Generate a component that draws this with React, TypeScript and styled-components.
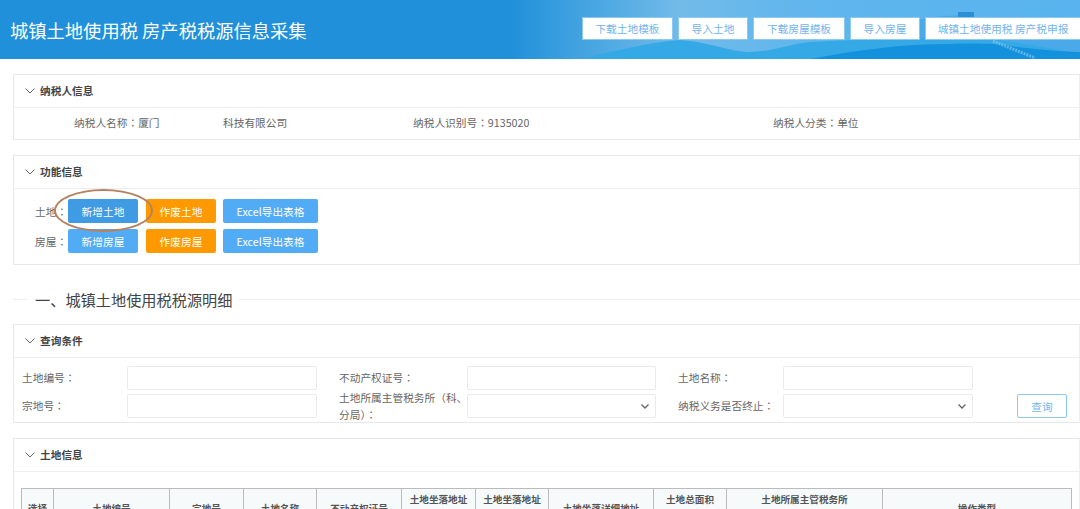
import styled, { createGlobalStyle } from "styled-components";

const GlobalStyle = createGlobalStyle`
  html, body {
    margin: 0;
    padding: 0;
    height: 509px;
    overflow: hidden;
    background: #fff;
    font-family: "Noto Sans CJK SC", "Noto Sans", sans-serif;
    font-size: 10.7px;
    color: #666;
  }
  * {
    box-sizing: border-box;
  }
`;

const Page = styled.div`
  width: 1080px;
  height: 509px;
  overflow: hidden;
`;

const Header = styled.header`
  position: relative;
  display: flex;
  align-items: center;
  justify-content: space-between;
  height: 59px;
  background: linear-gradient(90deg, #2090da 0, #2090da 510px, #3b9fdf 565px, #72bbe9 680px, #60b6ed 800px, #58b3ee 1080px);
  overflow: hidden;
`;

const HeaderArt = styled.svg`
  position: absolute;
  right: 0;
  top: 0;
  width: 600px;
  height: 59px;
`;

const HeaderTitle = styled.h1`
  position: relative;
  margin: 0 0 0 10px;
  font-size: 18.3px;
  font-weight: 400;
  color: #fff;
  white-space: nowrap;
`;

const HeaderActions = styled.div`
  position: relative;
  display: flex;
  gap: 5px;
  margin: 0 -1px 2px 0;
`;

const HeaderButton = styled.button<{ $w: number }>`
  width: ${(p) => p.$w}px;
  height: 23px;
  flex: none;
  padding: 0;
  border: 1px solid #8cc8f2;
  background: #fff;
  color: #72b4ee;
  font: inherit;
  white-space: nowrap;
`;

const Content = styled.main`
  padding: 15px 0 0 13px;
`;

const Panel = styled.section<{ $mb: number }>`
  margin-bottom: ${(p) => p.$mb}px;
  border: 1px solid #e8e8e8;
  border-right-color: #eee;
  background: #fff;
`;

const PanelHead = styled.div`
  display: flex;
  align-items: center;
  gap: 5px;
  height: 33px;
  padding: 0 0 1px 11px;
  border-bottom: 1px solid #eee;
  font-weight: 700;
  color: #444;
`;

const Chevron = () => (
  <svg width="10" height="6" viewBox="0 0 10 6" fill="none" stroke="#666" strokeWidth="1">
    <path d="M0.5 0.5 5 5 9.500 0.500" />
  </svg>
);

// Centred full-width colon, the SC face pushes it to the left of its box
const Colon = styled.span`
  font-family: "Noto Sans CJK TC", sans-serif;
`;

const InfoRow = styled.div`
  display: grid;
  grid-template-columns: 149px 190px 360px 1fr;
  align-items: center;
  height: 31px;
  padding: 0 0 2px 60px;
`;

const ActionArea = styled.div`
  position: relative;
  display: flex;
  flex-direction: column;
  gap: 6px;
  padding: 10px 0 11px 21px;
`;

const ActionRow = styled.div`
  display: flex;
  align-items: center;
`;

const ActionLabel = styled.span`
  width: 33px;
`;

const ActionButton = styled.button<{ $kind: "blue" | "active" | "orange"; $w: number }>`
  width: ${(p) => p.$w}px;
  height: 24px;
  margin-right: ${(p) => (p.$kind === "orange" ? 7 : 8)}px;
  padding: 0;
  border: 0;
  border-radius: 2px;
  color: #fff;
  font: inherit;
  background: ${(p) => (p.$kind === "orange" ? "#ff9900" : p.$kind === "active" ? "#3f9be3" : "#52abf5")};
`;

const Ellipse = styled.span`
  position: absolute;
  left: 40px;
  top: 0;
  width: 99px;
  height: 43px;
  border: 2px solid #b5825f;
  border-radius: 50%;
  pointer-events: none;
`;

const SectionTitle = styled.div`
  display: flex;
  align-items: center;
  gap: 7px;
  height: 24px;
  margin-bottom: 13px;
  margin-top: 22px;
  font-size: 15.2px;
  color: #444;
  &::before,
  &::after {
    content: "";
    height: 1px;
    background: #eee;
  }
  &::before {
    width: 15px;
  }
  &::after {
    flex: 1;
  }
`;

const QueryGrid = styled.div`
  display: grid;
  grid-template-columns: 105px 190px 22px 128px 189px 22px 105px 190px 44px 50px;
  grid-template-rows: 24px 24px;
  row-gap: 4px;
  align-items: center;
  padding: 8px 0 4px 8px;
`;

const FieldLabel = styled.label<{ $col: number }>`
  grid-column: ${(p) => p.$col};
  padding-bottom: 1px;
  line-height: 17px;
  white-space: nowrap;
`;

const TextInput = styled.input<{ $col: number }>`
  grid-column: ${(p) => p.$col};
  width: 100%;
  height: 24px;
  border: 1px solid #eaeaea;
  border-radius: 2px;
  background: #fff;
`;

const SelectInput = styled.select<{ $col: number }>`
  grid-column: ${(p) => p.$col};
  width: 100%;
  height: 24px;
  border: 1px solid #eaeaea;
  border-radius: 2px;
  appearance: none;
  background: #fff url("data:image/svg+xml,%3Csvg xmlns='http://www.w3.org/2000/svg' width='8' height='5' fill='none' stroke='%23666' stroke-width='1.400'%3E%3Cpath d='M.5.5 4 4 7.500.5'/%3E%3C/svg%3E") no-repeat right 6px center;
`;

const QueryButton = styled.button`
  grid-column: 10;
  height: 24px;
  padding: 0;
  border: 1px solid #8cc8f2;
  border-radius: 2px;
  background: #fff;
  color: #72b4ee;
  font: inherit;
`;

const TableArea = styled.div`
  padding: 16px 8px 0 7px;
`;

const LandTable = styled.table`
  width: 1050px;
  border-collapse: collapse;
  table-layout: fixed;
  border: 1px solid #bbb;
`;

const HeadCell = styled.th<{ $w: number }>`
  width: ${(p) => p.$w}px;
  height: 38px;
  padding: 0;
  border: 1px solid #bbb;
  background: #f6fafb;
  font-weight: 700;
  font-size: 9.6px;
  line-height: 18px;
  color: #555;
  vertical-align: middle;
`;

const columns: [string, number][] = [
  ["选择", 32],
  ["土地编号", 116],
  ["宗地号", 74],
  ["土地名称", 73],
  ["不动产权证号", 85],
  ["土地坐落地址\n（行政区划）", 74],
  ["土地坐落地址\n（所属街道）", 73],
  ["土地坐落详细地址", 105],
  ["土地总面积\n（平方米）", 73],
  ["土地所属主管税务所\n（科、分局）", 156],
  ["操作类型", 189],
];

const App = () => {
  return (
    <Page>
      <GlobalStyle />
      <Header>
        <HeaderArt viewBox="0 0 600 59" preserveAspectRatio="none">
          <path d="M430 22C460 14 490 12 520 24 550 32 580 30 600 34V59H430Z" fill="#4aa9e8" />
          <path d="M100 59C130 52 170 42 200 40 230 42 250 52 270 52 290 52 310 44 330 42 400 38 470 38 520 40 560 46 590 52 600 54V59Z" fill="#35a9e6" />
          <path d="M330 59C380 50 420 44 470 44 500 43 520 44 530 46 560 50 590 52 600 52V59Z" fill="#1391dd" />
          <path d="M513 41 555 58" stroke="#8fcdf0" strokeWidth="3" strokeDasharray="2 1" opacity="0.6" />
          <rect x="478" y="12" width="16" height="5" fill="#2b8fd6" />
        </HeaderArt>
        <HeaderTitle>城镇土地使用税 房产税税源信息采集</HeaderTitle>
        <HeaderActions>
          <HeaderButton $w={91}>下载土地模板</HeaderButton>
          <HeaderButton $w={70}>导入土地</HeaderButton>
          <HeaderButton $w={92}>下载房屋模板</HeaderButton>
          <HeaderButton $w={70}>导入房屋</HeaderButton>
          <HeaderButton $w={156}>城镇土地使用税 房产税申报</HeaderButton>
        </HeaderActions>
      </Header>
      <Content>
        <Panel $mb={15}>
          <PanelHead><Chevron />纳税人信息</PanelHead>
          <InfoRow>
            <span>纳税人名称<Colon>：</Colon>厦门</span>
            <span>科技有限公司</span>
            <span>纳税人识别号<Colon>：</Colon>9135020</span>
            <span>纳税人分类<Colon>：</Colon>单位</span>
          </InfoRow>
        </Panel>
        <Panel $mb={0}>
          <PanelHead><Chevron />功能信息</PanelHead>
          <ActionArea>
            <ActionRow>
              <ActionLabel>土地<Colon>：</Colon></ActionLabel>
              <ActionButton $kind="active" $w={70}>新增土地</ActionButton>
              <ActionButton $kind="orange" $w={70}>作废土地</ActionButton>
              <ActionButton $kind="blue" $w={95}>Excel导出表格</ActionButton>
            </ActionRow>
            <ActionRow>
              <ActionLabel>房屋<Colon>：</Colon></ActionLabel>
              <ActionButton $kind="blue" $w={70}>新增房屋</ActionButton>
              <ActionButton $kind="orange" $w={70}>作废房屋</ActionButton>
              <ActionButton $kind="blue" $w={95}>Excel导出表格</ActionButton>
            </ActionRow>
            <Ellipse />
          </ActionArea>
        </Panel>
        <SectionTitle>一、城镇土地使用税税源明细</SectionTitle>
        <Panel $mb={15}>
          <PanelHead><Chevron />查询条件</PanelHead>
          <QueryGrid>
            <FieldLabel $col={1}>土地编号<Colon>：</Colon></FieldLabel>
            <TextInput $col={2} />
            <FieldLabel $col={4}>不动产权证号<Colon>：</Colon></FieldLabel>
            <TextInput $col={5} />
            <FieldLabel $col={7}>土地名称<Colon>：</Colon></FieldLabel>
            <TextInput $col={8} />
            <FieldLabel $col={1}>宗地号<Colon>：</Colon></FieldLabel>
            <TextInput $col={2} />
            <FieldLabel $col={4}>土地所属主管税务所（科、<br />分局）<Colon>：</Colon></FieldLabel>
            <SelectInput $col={5} />
            <FieldLabel $col={7}>纳税义务是否终止<Colon>：</Colon></FieldLabel>
            <SelectInput $col={8} />
            <QueryButton>查询</QueryButton>
          </QueryGrid>
        </Panel>
        <Panel $mb={0}>
          <PanelHead><Chevron />土地信息</PanelHead>
          <TableArea>
            <LandTable>
              <thead>
                <tr>
                  {columns.map(([label, w]) => (
                    <HeadCell key={label} $w={w}>
                      {label.split("\n").map((line) => (
                        <div key={line}>{line}</div>
                      ))}
                    </HeadCell>
                  ))}
                </tr>
              </thead>
            </LandTable>
          </TableArea>
        </Panel>
      </Content>
    </Page>
  );
};

export default App;
